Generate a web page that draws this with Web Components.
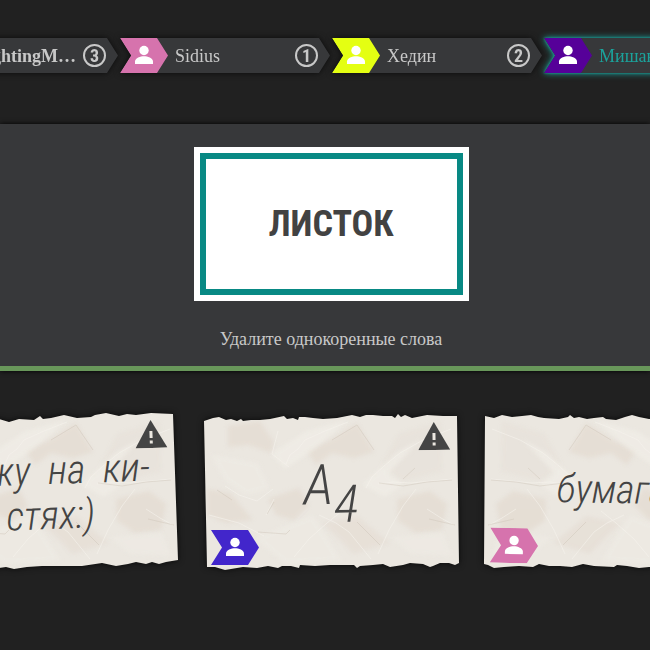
<!DOCTYPE html>
<html lang="ru">
<head>
<meta charset="utf-8">
<title>Листок</title>
<style>
  body { margin: 0; background: #212121; color: #c8c8c8; font-family: "Liberation Serif", "Times New Roman", serif; font-size: 18px; }
</style>
</head>
<body>
<game-page>
  <player-list slot="players">
    <player-chip color="#e07a30" score="3" bold>KnightingM…</player-chip>
    <player-chip color="#d673ad" score="1">Sidius</player-chip>
    <player-chip color="#e4ff12" score="2">Хедин</player-chip>
    <player-chip color="#560099" score="2" active>Мишаня</player-chip>
  </player-list>
  <word-panel slot="word" word="ЛИСТОК">Удалите однокоренные слова</word-panel>
  <paper-card slot="cards" variant="a" color="#3f9a5a" warn>Вожу&ensp;на&ensp;ки-<br>стях:)</paper-card>
  <paper-card slot="cards" variant="b" color="#4226cb" warn>A<sub>4</sub></paper-card>
  <paper-card slot="cards" variant="c" color="#d673ad">бумага</paper-card>
</game-page>
<script>
const define = (name, html, setup) => {
  const template = document.createElement('template');
  template.innerHTML = html;
  customElements.define(name, class extends HTMLElement {
    constructor() {
      super();
      this.attachShadow({ mode: 'open' }).append(template.content.cloneNode(true));
    }
    connectedCallback() { if (setup) setup(this, this.shadowRoot); }
  });
};

define('game-page', `
  <style>
    :host { display: block; min-height: 100vh; overflow: hidden; }
    header { padding: 38px 0 51px 12px; }
    main { display: flex; justify-content: center; gap: 25px; padding: 40px 0 40px 12px; }
  </style>
  <header><slot name="players"></slot></header>
  <slot name="word"></slot>
  <main><slot name="cards"></slot></main>`);

define('player-list', `
  <style>:host { display: flex; justify-content: center; gap: 2px; }</style>
  <slot></slot>`);

define('user-badge', `
  <style>
    :host { display: block; width: 48px; height: 35px; flex: none; }
    svg { display: block; width: 100%; height: 100%; }
  </style>
  <svg viewBox="0 0 48 35" aria-hidden="true">
    <path d="M0 0H37L48 17.500 37 35H0L11 17.500z" fill="var(--badge)"/>
    <circle cx="24" cy="12.500" r="4.700" fill="#fff"/>
    <path d="M15 26V23.500C15 20 20.500 18.300 24 18.300S33 20 33 23.500V26z" fill="#fff"/>
  </svg>`);

define('player-chip', `
  <style>
    :host { display: block; flex: none; width: 210px; filter: drop-shadow(0 0 3px #0a0a0a); }
    :host([active]) { color: #1ba39c; filter: drop-shadow(0 0 1px #1ba39c) drop-shadow(0 0 3px #1ba39c); }
    :host([bold]) { font-weight: bold; }
    .chip { display: flex; align-items: center; height: 35px; background: #37383a; clip-path: polygon(0 0, 199px 0, 100% 50%, 199px 100%, 0 100%, 11px 50%); }
    .name { flex: 1; padding-left: 7px; white-space: nowrap; line-height: 20px; }
    .score { box-sizing: border-box; width: 23px; height: 23px; margin-right: 12px; border: 2px solid #c8c8c8; border-radius: 50%; color: #c8c8c8; font: bold 18px/19px "Roboto Condensed", Roboto, sans-serif; text-align: center; }
  </style>
  <div class="chip"><user-badge></user-badge><span class="name"><slot></slot></span><span class="score"></span></div>`,
  (el, root) => {
    root.querySelector('user-badge').style.setProperty('--badge', el.getAttribute('color'));
    root.querySelector('.score').textContent = el.getAttribute('score');
  });

define('word-panel', `
  <style>
    :host { display: flex; flex-direction: column; align-items: center; gap: 28px; padding: 23px 0 16px 12px; background: #37383a; border-bottom: 5px solid #68975a; box-shadow: 0 0 5px #000; }
    .frame { padding: 6px; background: #fff; }
    h1 { box-sizing: border-box; width: 263px; margin: 0; padding: 42px 0; border: 6px solid #088984; color: #424242; font: bold 36px/46px "Roboto Condensed", "Liberation Sans Narrow", Roboto, sans-serif; text-align: center; }
    p { margin: 0; line-height: 21px; }
  </style>
  <div class="frame"><h1></h1></div>
  <p><slot></slot></p>`, (el, root) => { root.querySelector('h1').textContent = el.getAttribute('word'); });

const sheets = {
  a: '0,8 20,11 38,8 60,11 77,8 87,11 97,8 112,9 118,5 121,8 129,7 142,4 155,7 169,6 173,4 184,2 197,5 205,3 214,4 229,2 251,3 256,149 244,151 237,153 230,151 224,153 214,151 206,153 194,155 180,152 160,155 137,155 120,155 105,156 92,158 84,156 77,157 50,159 20,157 4,158',
  b: '1,10 10,7 16,6 23,9 28,8 34,10 38,8 40,10 48,9 57,9 67,8 81,5 84,8 90,7 95,9 96,6 102,6 110,7 120,8 134,7 149,4 157,6 163,4 170,4 180,5 189,5 192,7 195,3 198,6 202,4 209,7 224,4 240,5 254,5 256,152 252,154 246,152 237,152 230,155 227,156 220,153 207,152 200,154 187,156 180,153 170,154 157,155 154,157 151,154 127,154 112,155 97,154 96,157 88,155 79,155 75,157 65,155 54,157 40,156 22,159 12,156 4,156',
  c: '1,5 10,7 18,4 28,6 38,5 47,4 54,6 60,7 75,8 84,6 86,4 90,7 95,6 103,8 110,7 119,6 122,8 132,9 141,6 148,4 155,6 165,8 200,5 256,8 255,156 165,156 155,157 143,155 133,154 130,156 110,155 99,153 88,156 76,155 65,155 55,153 49,156 35,155 20,156 10,157 4,154 0,153'
};

define('paper-card', `
  <style>
    :host { display: grid; position: relative; flex: none; width: 256px; height: 160px; --tilt: -1deg; color: #444; }
    :host([variant="a"]) { --tilt: -2deg; }
    :host([variant="c"]) { --tilt: 1deg; }
    .sheet { position: absolute; inset: 0; width: 100%; height: 100%; overflow: visible; filter: drop-shadow(0 0 3px #080808); }
    .content { position: relative; display: grid; place-content: center; padding-top: 4px; transform: rotate(var(--tilt)); text-align: center; white-space: nowrap; font: italic 300 40px/45px "Roboto Condensed", "Liberation Sans Narrow", Roboto, sans-serif; }
    :host([variant="b"]) .content { padding: 0 0 12px; font-size: 56px; }
    :host([variant="c"]) .content { padding: 0 0 4px; }
    :host([variant="c"]) .folds { transform: scaleX(-1); transform-origin: 128px 80px; }
    ::slotted(sub) { font-size: 52px; line-height: 1px; vertical-align: -18px; }
    button { position: absolute; top: 11px; right: 9px; width: 32px; height: 28px; padding: 0; border: 0; background: none; color: inherit; transform: rotate(var(--tilt)); }
    :host([variant="a"]) button { top: 9px; right: 11px; }
    button svg { display: block; width: 100%; height: 100%; }
    :host(:not([warn])) button { display: none; }
    user-badge { position: absolute; left: 8px; bottom: 6px; }
    :host([variant="c"]) user-badge { left: 6px; bottom: 8px; transform: rotate(var(--tilt)); }
  </style>
  <svg class="sheet" viewBox="0 0 256 160" aria-hidden="true">
    <defs>
      <clipPath id="edge"><polygon/></clipPath>
      <filter id="soft" x="-10%" y="-10%" width="120%" height="120%"><feGaussianBlur stdDeviation="2"/></filter>
      <filter id="fine"><feGaussianBlur stdDeviation=".6"/></filter>
    </defs>
    <g clip-path="url(#edge)">
      <rect width="256" height="160" fill="#ebe7e0"/>
      <g class="folds">
        <g filter="url(#soft)" fill="#e4dcd2" opacity=".8">
          <path d="M25 15L57 10 71 31 68 42 46 34 25 36z"/>
          <path d="M103 39L128 29 154 12 171 41 151 47 129 42 113 54z"/>
          <path d="M4 78L27 82 50 109 23 112 4 104z"/>
          <path d="M65 88L96 77 106 94 91 109 73 104z"/>
          <path d="M194 88L227 80 244 93 239 119 213 122 195 110z"/>
          <path d="M119 112L154 105 187 132 150 143 133 125z" opacity=".7"/>
          <path d="M195 23L238 10 239 60 200 70 178 55z" opacity=".4"/>
        </g>
        <g filter="url(#soft)" fill="#f0ede6" opacity=".8">
          <path d="M68 43L103 20 145 9 109 40 82 58z"/>
          <path d="M7 43L55 52 67 78 43 84 22 70z" opacity=".7"/>
          <path d="M159 74L193 42 219 27 185 63 201 73 182 86z"/>
          <path d="M51 127L110 104 139 150 82 153z" opacity=".7"/>
          <path d="M188 126L240 121 249 145 207 143z" opacity=".6"/>
        </g>
        <g filter="url(#fine)" fill="none" stroke="#f6f3ed" stroke-width="1" opacity=".6">
          <path d="M83 53L87 44 95 38 102 29 122 20 145 11M75 20L69 43 86 56M163 77L169 66 181 55 197 42 220 29 248 18M22 75L36 84 54 90 70 78M63 104L71 88M91 146L106 128 124 112 139 100M175 143L186 119 200 95 213 78M175 73L190 71 208 72 249 68M116 104L133 112 146 121 168 148M6 104L36 112 61 125M224 98L238 107 251 114"/>
        </g>
        <g filter="url(#fine)" fill="none" stroke="#cbc1b4" stroke-width="1" opacity=".4">
          <path d="M129 29L154 14 171 39M176 72L200 75 224 71 249 69M14 79L29 89M55 121L83 123 87 119M64 103L71 91M226 108L252 114M154 111L177 134M212 57L200 68"/>
        </g>
      </g>
    </g>
  </svg>
  <div class="content"><div><slot></slot></div></div>
  <button aria-label="Пожаловаться"><svg viewBox="0 0 32 28"><path d="M16 0L32 28H0z" fill="currentColor"/><path d="M14.500 11H17.500V18H14.500zM14.500 20.500H17.500V23.500H14.500z" fill="#ebe7e0"/></svg></button>
  <user-badge></user-badge>`,
  (el, root) => {
    root.querySelector('polygon').setAttribute('points', sheets[el.getAttribute('variant')]);
    root.querySelector('user-badge').style.setProperty('--badge', el.getAttribute('color'));
  });
</script>
</body>
</html>
